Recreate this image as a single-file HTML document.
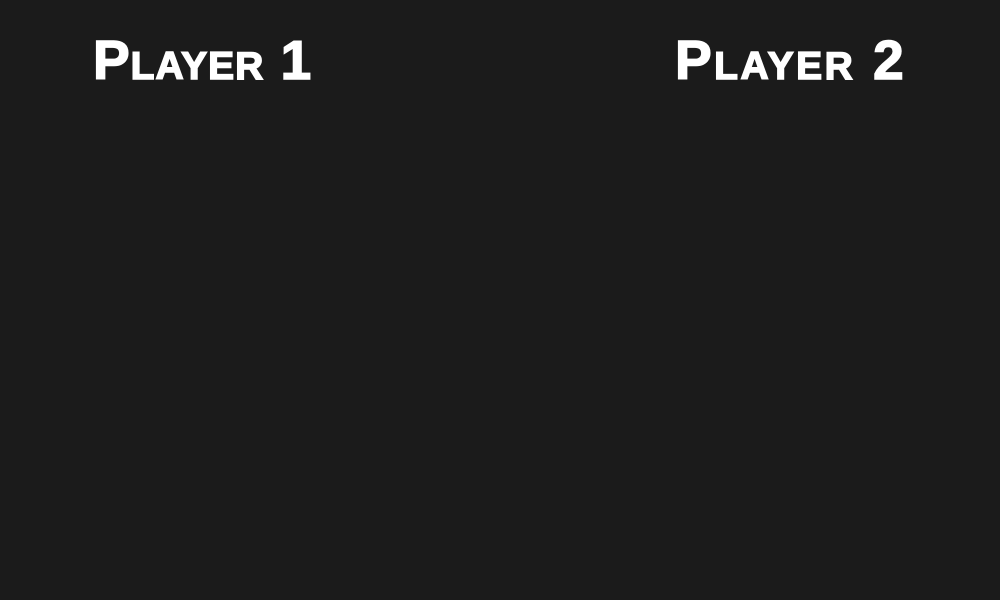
<!DOCTYPE html>
<html><head><meta charset="utf-8"><style>
html,body{margin:0;padding:0;background:#1b1b1b;width:1000px;height:600px;overflow:hidden}
.t{position:absolute;top:28px;color:#fff;font-family:"Liberation Sans",sans-serif;font-weight:900;font-size:55px;font-variant:small-caps;letter-spacing:1px;white-space:nowrap;line-height:64px;-webkit-text-stroke:1.5px #fff}
</style></head><body>
<div class="t" style="left:93px">Player 1</div>
<div class="t" style="left:675px;letter-spacing:2.5px">Player 2</div>
</body></html>
